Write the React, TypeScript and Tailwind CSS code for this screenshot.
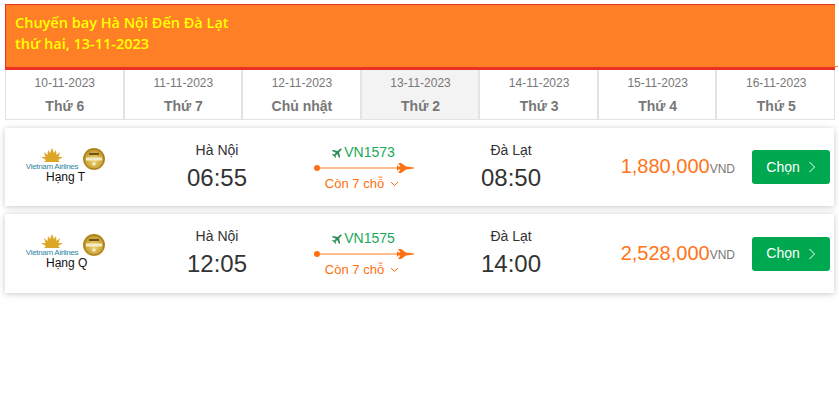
const days = [
  ["10-11-2023", "Thứ 6"],
  ["11-11-2023", "Thứ 7"],
  ["12-11-2023", "Chủ nhật"],
  ["13-11-2023", "Thứ 2"],
  ["14-11-2023", "Thứ 3"],
  ["15-11-2023", "Thứ 4"],
  ["16-11-2023", "Thứ 5"],
];

const flights = [
  { cls: "Hạng T", dep: "06:55", code: "VN1573", arr: "08:50", price: "1,880,000", h: "h-[78px]" },
  { cls: "Hạng Q", dep: "12:05", code: "VN1575", arr: "14:00", price: "2,528,000", h: "h-[79px]" },
];

function Logo({ cls }: { cls: string }) {
  return (
    <div className="w-[140px] shrink-0 flex flex-col items-start pt-[20px] pl-[20px]">
      <div className="flex items-end h-[23px]">
        <div className="w-[54px] flex flex-col items-center">
          <svg width="22" height="14" viewBox="0 0 22 14">
            <path d="M11 0 L13 5 L15 2 L15.500 7 L19 4 L17.500 9 L22 9 L17 12 L19 14 L3 14 L5 12 L0 9 L4.500 9 L3 4 L6.500 7 L7 2 L9 5Z" fill="#dca726" />
          </svg>
          <span className="text-[8px] leading-[9px] tracking-[-0.3px] text-[#2d86a5] whitespace-nowrap">Vietnam Airlines</span>
        </div>
        <svg width="22" height="22" viewBox="0 0 22 22" className="ml-[4px] mb-[1px]">
          <defs>
            <radialGradient id="gold" cx="50%" cy="55%" r="55%">
              <stop offset="0%" stopColor="#f3d778" />
              <stop offset="100%" stopColor="#b98d1e" />
            </radialGradient>
          </defs>
          <circle cx="11" cy="11" r="11" fill="url(#gold)" />
          <circle cx="11" cy="11" r="10" fill="none" stroke="#8f6f14" strokeWidth="0.7" />
          <rect x="3" y="9.500" width="16" height="3" fill="#f4ecc8" />
          <path d="M6 5 H16 V7 H6Z" fill="#6d5714" />
          <circle cx="11" cy="16" r="1.800" fill="#f4ecc8" />
        </svg>
      </div>
      <div className="text-[12px] leading-[14px] text-[#111] ml-[21px] -mt-[1px]">{cls}</div>
    </div>
  );
}

function Arrow() {
  return (
    <svg width="100" height="12" viewBox="0 0 100 12" className="block mt-[1px]">
      <circle cx="3" cy="6" r="3" fill="#ff6f0f" />
      <path d="M3 5.500 H84 V6.500 H3Z" fill="#ff7e27" />
      <path d="M84 1 H87 L92 4.500 L100 5.500 V6.500 L92 7.500 L87 11 H84 L86.500 7.500 H84.500 L83 9 V3 L84.500 4.500 H86.500Z" fill="#ff6f0f" />
    </svg>
  );
}

function Flight({ f }: { f: (typeof flights)[number] }) {
  return (
    <div className={`${f.h} mb-[8px] flex bg-white shadow-[0_1px_6px_rgba(0,0,0,0.22)]`}>
      <Logo cls={f.cls} />
      <div className="w-[144px] shrink-0 pt-[13px] text-center text-[#333]">
        <div className="text-[14px] leading-[18px]">Hà Nội</div>
        <div className="text-[24px] leading-[32px] mt-[3px]">{f.dep}</div>
      </div>
      <div className="w-[100px] shrink-0 ml-[25px] pt-[16px] flex flex-col items-center">
        <div className="flex items-center text-[14px] leading-[17px] text-[#1aa85a] ml-[-1px]">
          <svg width="11" height="11" viewBox="0 0 12 12" className="mr-[1px]">
            <path
              transform="rotate(45 6 6)"
              d="M6 0 C6.600 0 7 .6 7 1.500 V4.500 L11.500 7.500 V9 L7 7.500 V10 L8.500 11 V12 L6 11.300 L3.500 12 V11 L5 10 V7.500 L.5 9 V7.500 L5 4.500 V1.500 C5 .6 5.400 0 6 0Z"
              fill="#2a8f55"
            />
          </svg>
          {f.code}
        </div>
        <Arrow />
        <div className="flex items-center text-[13px] leading-[15px] text-[#ff6f0f] mt-[2px] -ml-[4px]">
          Còn 7 chỗ
          <svg width="9" height="6" viewBox="0 0 9 6" className="ml-[6px]" fill="none" stroke="#ff6f0f" strokeWidth="1">
            <path d="M1 1 L4.500 4.500 L8 1" />
          </svg>
        </div>
      </div>
      <div className="w-[130px] shrink-0 ml-[32px] pt-[13px] text-center text-[#333]">
        <div className="text-[14px] leading-[18px]">Đà Lạt</div>
        <div className="text-[24px] leading-[32px] mt-[3px]">{f.arr}</div>
      </div>
      <div className="flex-1 flex items-center justify-end pb-[2px] pr-[17px]">
        <span className="text-[20px] leading-[28px] text-[#ff7517]">{f.price}</span>
        <span className="text-[12px] leading-[14px] mt-[5px] text-[#777]">VND</span>
      </div>
      <div className="shrink-0 self-center pr-[4px]">
        <div className="w-[78px] h-[34px] bg-[#00a84f] rounded-[3px] flex items-center justify-center text-white text-[14px]">
          Chọn
          <svg width="8" height="12" viewBox="0 0 8 12" className="ml-[8px]" fill="none" stroke="#fff" strokeWidth="1">
            <path d="M1.500 1 L6.500 6 L1.500 11" />
          </svg>
        </div>
      </div>
    </div>
  );
}

export default function App() {
  return (
    <div className="w-[839px] h-[403px] bg-white px-[5px] pt-[4px] overflow-hidden font-['Liberation_Sans',Arial,sans-serif]">
      <div className="relative w-[830px] h-[66px] bg-[#ff7f27] border-t border-l border-[#ed3024] border-b-[3px] pl-[9px] pt-[7px] text-[14.5px] leading-[21px] font-semibold text-[#ffff00] font-['Open_Sans',sans-serif]">
        <div>Chuyến bay Hà Nội Đến Đà Lạt</div>
        <div>thứ hai, 13-11-2023</div>
        <span className="absolute -right-[3px] bottom-0 w-[3px] h-[1px] bg-[#ff7f27]" />
      </div>
      <div className="w-[830px] h-[50px] flex border-l border-r border-b border-[#e3e3e3]">
        {days.map(([date, day], i) => (
          <div
            key={date}
            className={`flex-1 text-center pt-[6px] pl-[1px] border-l-2 first:border-l-0 border-[#e3e3e3] ${i === 3 ? "bg-[#f3f3f3]" : "bg-white"}`}
          >
            <div className="text-[12px] leading-[15px] text-[#777]">{date}</div>
            <div className="text-[14px] leading-[16px] mt-[7px] font-bold text-[#777]">{day}</div>
          </div>
        ))}
      </div>
      <div className="h-[8px]" />
      {flights.map((f) => (
        <Flight key={f.code} f={f} />
      ))}
    </div>
  );
}
